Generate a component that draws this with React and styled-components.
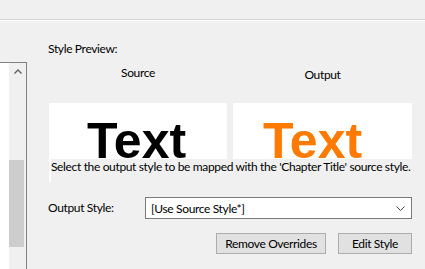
import React from 'react'
import styled, { createGlobalStyle } from 'styled-components'

const GlobalStyle = createGlobalStyle`
    html, body {
        margin: 0;
        padding: 0;
        background: #f0f0f0;
    }
`

const Page = styled.div`
    width: 425px;
    height: 269px;
    overflow: hidden;
    background: #f0f0f0;
    font-family: Lato, "Noto Sans", sans-serif;
    font-size: 12px;
    letter-spacing: -0.35px;
    color: #000;
    display: flex;
    flex-direction: column;
`

const TopBar = styled.div`
    height: 19px;
    border-bottom: 1px solid #d5d5d5;
    box-shadow: 0 1px 0 #ffffff;
    flex-shrink: 0;
`

const Body = styled.div`
    flex: 1;
    display: flex;
`

const ListBox = styled.div`
    width: 26px;
    margin-top: 42px;
    border-top: 1px solid #828282;
    border-right: 1px solid #828282;
    display: flex;
    background: #fff;
`

const ListArea = styled.div`
    flex: 1;
    background: #fff;
`

const ScrollBar = styled.div`
    width: 17px;
    background: #f0f0f0;
    display: flex;
    flex-direction: column;
`

const ScrollArrow = styled.div`
    height: 17px;
    display: flex;
    align-items: center;
    justify-content: center;
    padding-left: 1px;
`

const ScrollThumb = styled.div`
    margin-top: 80px;
    height: 87px;
    width: 15px;
    background: #cdcdcd;
`

const Panel = styled.div`
    width: 364px;
    margin-left: 21px;
    padding-top: 21px;
    display: flex;
    flex-direction: column;
`

const Title = styled.div`
    line-height: 16px;
`

const Columns = styled.div`
    display: grid;
    grid-template-columns: 178px 179px;
    column-gap: 6px;
    margin-left: 1px;
`

const ColumnHead = styled.div`
    text-align: center;
    line-height: 16px;
    margin-top: ${p => p.$top}px;
`

const PreviewRow = styled.div`
    position: relative;
    margin-top: 20px;
`

const PreviewBox = styled.div`
    height: 79px;
    background: #fff;
    overflow: hidden;
    padding-left: ${p => p.$indent}px;
    padding-top: 9px;
    box-sizing: border-box;
`

const PreviewText = styled.div`
    font-family: "Liberation Sans", Arial, sans-serif;
    font-weight: 700;
    font-size: 50px;
    letter-spacing: 0;
    line-height: normal;
    color: ${p => p.$color};
`

const Hint = styled.div`
    position: absolute;
    left: 3px;
    right: -14px;
    top: 56px;
    height: 23px;
    background: #f0f0f0;
    line-height: 16px;
    white-space: nowrap;
`

const FieldRow = styled.div`
    display: flex;
    align-items: center;
    margin-top: 15px;
`

const FieldLabel = styled.div`
    width: 97px;
    line-height: 16px;
`

const Select = styled.div`
    width: 267px;
    height: 22px;
    box-sizing: border-box;
    border: 1px solid #7a7a7a;
    background: #fff;
    display: flex;
    align-items: center;
    justify-content: space-between;
    padding: 0 6px 0 5px;
`

const ButtonRow = styled.div`
    display: flex;
    justify-content: flex-end;
    gap: 12px;
    margin-top: 14px;
`

const Button = styled.div`
    width: ${p => p.$w}px;
    height: 21px;
    box-sizing: border-box;
    border: 1px solid #adadad;
    background: #e1e1e1;
    display: flex;
    align-items: center;
    justify-content: center;
`

const UpArrow = () => (
    <svg width="8" height="5" viewBox="0 0 8 5">
        <polyline points="0.5,4.5 4,1 7.5,4.5" fill="none" stroke="#606060" strokeWidth="1.4" />
    </svg>
)

const Chevron = () => (
    <svg width="9" height="5" viewBox="0 0 9 5">
        <polyline points="0.5,0.5 4.5,4.5 8.5,0.5" fill="none" stroke="#404040" strokeWidth="1" />
    </svg>
)

export default function App() {
    return (
        <Page>
            <GlobalStyle />
            <TopBar />
            <Body>
                <ListBox>
                    <ListArea />
                    <ScrollBar>
                        <ScrollArrow><UpArrow /></ScrollArrow>
                        <ScrollThumb />
                    </ScrollBar>
                </ListBox>
                <Panel>
                    <Title>Style Preview:</Title>
                    <Columns>
                        <ColumnHead $top={8}>Source</ColumnHead>
                        <ColumnHead $top={10}>Output</ColumnHead>
                    </Columns>
                    <PreviewRow>
                        <Columns>
                            <PreviewBox $indent={38}>
                                <PreviewText $color="#000">Text</PreviewText>
                            </PreviewBox>
                            <PreviewBox $indent={30}>
                                <PreviewText $color="#ff7a00">Text</PreviewText>
                            </PreviewBox>
                        </Columns>
                        <Hint>Select the output style to be mapped with the 'Chapter Title' source style.</Hint>
                    </PreviewRow>
                    <FieldRow>
                        <FieldLabel>Output Style:</FieldLabel>
                        <Select>
                            <span>[Use Source Style*]</span>
                            <Chevron />
                        </Select>
                    </FieldRow>
                    <ButtonRow>
                        <Button $w={110}>Remove Overrides</Button>
                        <Button $w={74}>Edit Style</Button>
                    </ButtonRow>
                </Panel>
            </Body>
        </Page>
    )
}
